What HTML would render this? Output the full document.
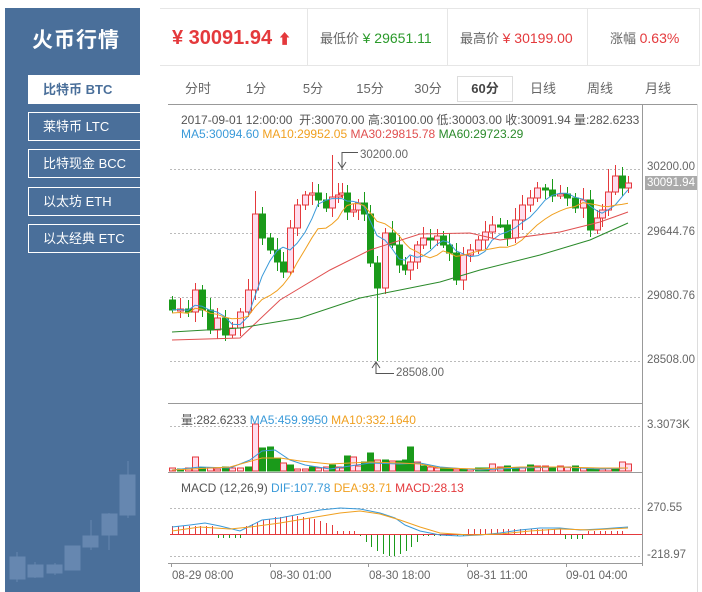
<!DOCTYPE html>
<html><head><meta charset="utf-8"><style>
*{margin:0;padding:0;box-sizing:border-box}
body{width:702px;height:592px;background:#fff;font-family:"Liberation Sans","Noto Sans CJK SC",sans-serif;position:relative;overflow:hidden;color:#555}
.side{position:absolute;left:5px;top:8px;width:135px;height:584px;background:#4a6f9a}
.title{position:absolute;left:32px;top:24px;color:#fff;font-size:21px;font-weight:bold;letter-spacing:1px}
.mi{position:absolute;left:28px;width:112px;height:29px;border:1px solid #fff;border-right:none;color:#fff;font-size:13px;line-height:27px;padding-left:14px}
.mi.on{background:#fff;color:#4a6f9a;font-weight:bold}
.hd{position:absolute;top:8px;height:58px;border-top:1px solid #e6e6e6;border-bottom:1px solid #e6e6e6;font-size:13px;line-height:58px;color:#666}
.tab{position:absolute;top:76px;font-size:13px;color:#666;width:56px;text-align:center;line-height:26px}
.ax{position:absolute;font-size:11.5px;color:#666}
</style></head><body>
<div class="side"></div>
<div class="title">火币行情</div>
<div class="mi on" style="top:75px">比特币 BTC</div>
<div class="mi" style="top:112px">莱特币 LTC</div>
<div class="mi" style="top:149px">比特现金 BCC</div>
<div class="mi" style="top:187px">以太坊 ETH</div>
<div class="mi" style="top:224px">以太经典 ETC</div>
<svg style="position:absolute;left:0;top:420px" width="140" height="172">
<g fill="#6687b0" stroke="#6687b0">
<line x1="17" y1="132" x2="17" y2="162"/><rect x="10" y="137" width="15" height="22"/>
<line x1="35" y1="142" x2="35" y2="158"/><rect x="28" y="145" width="15" height="12"/>
<line x1="55" y1="143" x2="55" y2="155"/><rect x="47" y="145" width="15" height="8"/>
<rect x="65" y="126" width="15" height="24"/>
<line x1="91" y1="100" x2="91" y2="130"/><rect x="83" y="116" width="15" height="11"/>
<line x1="109" y1="93" x2="109" y2="130"/><rect x="102" y="94" width="15" height="21"/>
<line x1="128" y1="41" x2="128" y2="98"/><rect x="120" y="55" width="15" height="40"/>
</g></svg>
<div class="hd" style="left:160px;width:148px;border-right:1px solid #e6e6e6;color:#e4393c;font-size:20px;font-weight:bold;padding-left:12px">¥ 30091.94 <span style="font-size:14px">&#11014;</span></div>
<div class="hd" style="left:308px;width:140px;border-right:1px solid #e6e6e6;padding-left:12px">最低价 <span style="color:#2a9a2a;font-size:14px">¥ 29651.11</span></div>
<div class="hd" style="left:448px;width:140px;border-right:1px solid #e6e6e6;padding-left:12px">最高价 <span style="color:#e4393c;font-size:14px">¥ 30199.00</span></div>
<div class="hd" style="left:588px;width:112px;border-right:1px solid #e6e6e6;padding-left:22px">涨幅 <span style="color:#e4393c;font-size:14px">0.63%</span></div>
<div class="tab" style="left:170px">分时</div>
<div class="tab" style="left:228px">1分</div>
<div class="tab" style="left:285px">5分</div>
<div class="tab" style="left:342px">15分</div>
<div class="tab" style="left:400px">30分</div>
<div class="tab" style="left:457px;border:1px solid #ddd;font-weight:bold;color:#444;line-height:24px">60分</div>
<div class="tab" style="left:515px">日线</div>
<div class="tab" style="left:572px">周线</div>
<div class="tab" style="left:630px">月线</div>
<svg id="c" style="position:absolute;left:0;top:0" width="702" height="592" font-family="Liberation Sans, Noto Sans CJK SC, sans-serif" font-size="12"></svg>
<div class="ax" style="left:181px;top:111px;font-size:12px;color:#555;white-space:nowrap">2017-09-01 12:00:00 &nbsp;开:30070.00 高:30100.00 低:30003.00 收:30091.94 量:282.6233</div>
<div class="ax" style="left:181px;top:127px;font-size:12px;white-space:nowrap"><span style="color:#3a9ad9">MA5:30094.60</span> <span style="color:#f0a020">MA10:29952.05</span> <span style="color:#e05050">MA30:29815.78</span> <span style="color:#2a8a2a">MA60:29723.29</span></div>
<div class="ax" style="left:360px;top:149px">30200.00</div>
<div class="ax" style="left:396px;top:367px">28508.00</div>
<div class="ax" style="left:647px;top:161px">30200.00</div>
<div style="position:absolute;left:645px;top:176px;background:#aaa;color:#fff;font-size:11.5px;padding:0 2px;line-height:14px">30091.94</div>
<div class="ax" style="left:647px;top:226px">29644.76</div>
<div class="ax" style="left:647px;top:290px">29080.76</div>
<div class="ax" style="left:647px;top:354px">28508.00</div>
<div class="ax" style="left:181px;top:411px;font-size:12px;white-space:nowrap;color:#555">量:282.6233 <span style="color:#3a9ad9">MA5:459.9950</span> <span style="color:#f0a020">MA10:332.1640</span></div>
<div class="ax" style="left:647px;top:419px">3.3073K</div>
<div class="ax" style="left:181px;top:481px;font-size:12px;white-space:nowrap;color:#555">MACD (12,26,9) <span style="color:#3a9ad9">DIF:107.78</span> <span style="color:#f0a020">DEA:93.71</span> <span style="color:#e4393c">MACD:28.13</span></div>
<div class="ax" style="left:647px;top:502px">270.55</div>
<div class="ax" style="left:647px;top:549px">-218.97</div>
<div class="ax" style="left:172px;top:570px">08-29 08:00</div>
<div class="ax" style="left:270px;top:570px">08-30 01:00</div>
<div class="ax" style="left:369px;top:570px">08-30 18:00</div>
<div class="ax" style="left:467px;top:570px">08-31 11:00</div>
<div class="ax" style="left:566px;top:570px">09-01 04:00</div>
<script>
var s='';
function L(x1,y1,x2,y2,c,d){s+='<line x1="'+x1+'" y1="'+y1+'" x2="'+x2+'" y2="'+y2+'" stroke="'+c+'"'+(d?' stroke-dasharray="2,2"':'')+'/>';}
L(168,104.5,697,104.5,'#999');L(642.5,104,642.5,566,'#999');L(697.5,104,697.5,592,'#ddd');
L(168,403.5,642,403.5,'#999');L(168,472.5,642,472.5,'#999');L(168,563.5,642,563.5,'#999');
[169,233,297,361,426,508,556].forEach(function(y){L(170,y+.5,642,y+.5,'#bbb',1)});
[171,270,368,467,566].forEach(function(x){L(x+.5,563,x+.5,567,'#999')});
var cl=[[172,310],[180,309],[188,312],[195,290],[202,310],[210,330],[217,318],[225,335],[232,328],[240,312],[248,290],[255,214],[262,238],[270,250],[277,262],[283,272],[290,228],[297,205],[305,195],[312,193],[318,200],[326,208],[332,197],[338,195],[342,193],[347,212],[353,210],[358,203],[364,214],[370,263],[377,288],[385,233],[392,245],[399,265],[405,270],[410,262],[417,245],[423,238],[430,240],[437,236],[443,245],[449,253],[456,280],[463,255],[470,250],[478,240],[485,232],[492,225],[500,225],[507,238],[515,220],[522,205],[530,198],[537,188],[545,190],[552,196],[560,194],[567,198],[575,208],[583,200],[590,230],[597,218],[602,210],[608,192],[615,176],[622,188],[628,183]];
var prev=300;
cl.forEach(function(p,i){var x=p[0],c=p[1],o=prev,up=c<o,col=up?'#e4393c':'#1a9a1a';var hi=Math.min(o,c)-4-(i*7%9),lo=Math.max(o,c)+3+(i*5%8);
if(i==11)hi=191;if(i==22)hi=155;if(i==30)lo=361;if(i==63)hi=169;
L(x+.5,hi,x+.5,lo,col);var h=Math.max(Math.abs(c-o),2);
s+='<rect x="'+(x-2.5)+'" y="'+Math.min(o,c)+'" width="6" height="'+h+'" fill="'+(up?'#fde':'#1a9a1a')+'" stroke="'+col+'"/>';prev=c;});
function ma(n){var pts=[];for(var i=0;i<cl.length;i++){var a=0,k=0;for(var j=Math.max(0,i-n+1);j<=i;j++){a+=cl[j][1];k++}pts.push(cl[i][0]+','+(a/k+ (n==10?3:0)).toFixed(1))}return pts.join(' ')}
s+='<polyline fill="none" stroke="#3a9ad9" points="'+ma(5)+'"/>';
s+='<polyline fill="none" stroke="#f0a020" points="'+ma(10)+'"/>';
s+='<polyline fill="none" stroke="#e05050" points="172,340 240,338 280,300 330,270 370,250 420,234 470,233 500,240 560,232 600,222 628,212"/>';
s+='<polyline fill="none" stroke="#2a8a2a" points="172,332 240,328 300,318 360,298 400,290 440,282 480,270 540,255 590,240 628,223"/>';
s+='<polyline fill="none" stroke="#555" points="338,162 342,168 346,162"/>';L(342,152,342,170,'#555');L(342,152.5,358,152.5,'#555');
s+='<polyline fill="none" stroke="#555" points="372,368 376,362 380,368"/>';L(376,362,376,374,'#555');L(376,373.5,394,373.5,'#555');
for(var i=0;i<cl.length;i++){var x=cl[i][0],v=[3,2,3,14,3,3,2,4,3,3,4,47,23,24,13,8,6,2,2,4,3,4,6,4,3,15,14,5,9,18,11,11,10,10,11,24,9,5,4,3,3,2,2,2,2,3,3,7,4,5,3,3,6,5,5,4,5,4,5,3,3,2,2,3,2,9,7,6][i]||3;
var g=i%3==1||[12,13,14,29,33,35,41,45,50,55,60,64].indexOf(i)>=0;s+='<rect x="'+(x-2.5)+'" y="'+(471-v)+'" width="6" height="'+v+'" fill="'+(g?'#1a9a1a':'#fde')+'" stroke="'+(g?'#1a9a1a':'#e4393c')+'"/>';}
s+='<polyline fill="none" stroke="#3a9ad9" points="172,470 200,467 230,468 250,460 262,451 275,450 290,460 305,465 330,469 370,463 400,464 420,463 440,467 480,470 520,468 560,467 600,469 628,468"/>';
s+='<polyline fill="none" stroke="#f0a020" points="172,470 230,467 262,458 280,458 300,461 330,464 370,462 400,463 420,464 440,468 480,469 520,467 560,467 600,468 628,468"/>';
function mf(x){if(x<212)return 8;if(x<245)return -4;if(x<335)return 8+10*Math.sin((x-245)/90*Math.PI);if(x<358)return 3;if(x<425)return -22*Math.sin((x-358)/67*Math.PI);if(x<468)return -2;if(x<562)return 5;if(x<585)return -5;return 3;}
for(var x=172;x<=628;x+=5.7){var m=Math.round(mf(x));if(m==0)continue;L(Math.round(x)+.5,534,Math.round(x)+.5,534-m,m>0?'#e4393c':'#1a9a1a');}
L(170,534.5,642,534.5,'#e4393c');
s+='<polyline fill="none" stroke="#3a9ad9" points="172,527 190,525 205,523 220,526 240,531 250,526 262,520 280,518 300,514 320,510 340,508 360,509 380,513 395,518 405,525 420,531 440,535 460,536 480,535 500,533 520,530 540,528 560,528 580,530 600,529 628,527"/>';
s+='<polyline fill="none" stroke="#f0a020" points="172,531 200,527 230,529 250,527 280,523 310,518 340,513 360,511 380,514 400,520 420,527 440,533 470,535 500,534 530,531 560,529 590,530 628,528"/>';
document.getElementById('c').innerHTML=s;
</script>
</body></html>
